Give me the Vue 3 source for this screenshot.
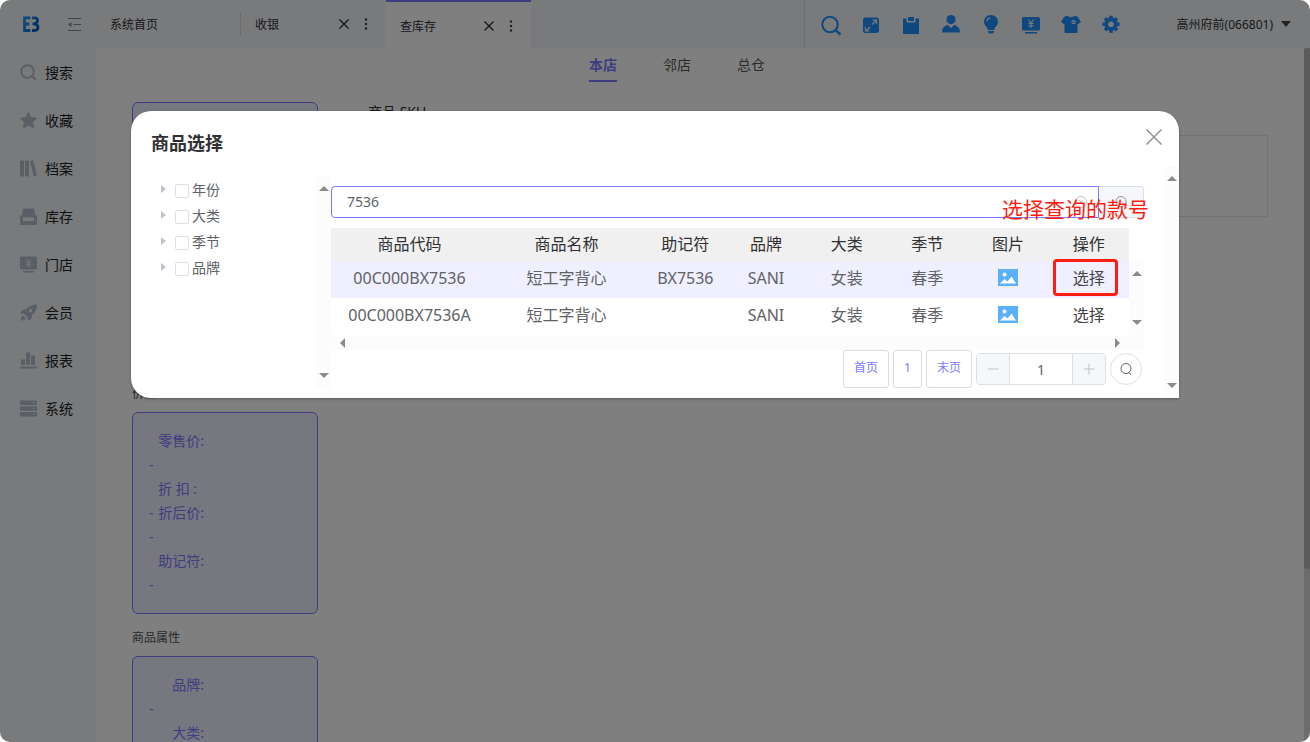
<script setup>
import { ref } from 'vue'

const menu = [
  { key: 'search', label: '搜索' },
  { key: 'star', label: '收藏' },
  { key: 'books', label: '档案' },
  { key: 'stock', label: '库存' },
  { key: 'store', label: '门店' },
  { key: 'rocket', label: '会员' },
  { key: 'chart', label: '报表' },
  { key: 'server', label: '系统' }
]
const tools = [
  { key: 'find', label: '查找' },
  { key: 'expand', label: '全屏' },
  { key: 'clip', label: '单据' },
  { key: 'user', label: '用户' },
  { key: 'bulb', label: '提示' },
  { key: 'cash', label: '收银' },
  { key: 'shirt', label: '商品' },
  { key: 'gear', label: '设置' }
]
const priceLines = [
  ['', '零售价:'],
  ['-', ''],
  ['', '折 扣 :\u00a0\u00a0'],
  ['-', '折后价:'],
  ['-', ''],
  ['', '助记符:'],
  ['-', '']
]
const attrLines = [
  ['', '品牌:'],
  ['-', ''],
  ['', '大类:']
]
const tree = ['年份', '大类', '季节', '品牌']
const columns = ['商品代码', '商品名称', '助记符', '品牌', '大类', '季节', '图片', '操作']
const rows = [
  { code: '00C000BX7536', name: '短工字背心', memo: 'BX7536', brand: 'SANI', type: '女装', season: '春季' },
  { code: '00C000BX7536A', name: '短工字背心', memo: '', brand: 'SANI', type: '女装', season: '春季' }
]
const keyword = ref('7536')
const page = ref('1')
</script>

<template>
  <div class="app">
    <header class="topbar">
      <div class="brand">
        <svg class="logo" viewBox="0 0 17 17" aria-hidden="true">
          <defs>
            <linearGradient id="lg" gradientUnits="userSpaceOnUse" x1="0" y1="4" x2="17" y2="13">
              <stop offset="0" stop-color="#1f9cff" />
              <stop offset="1" stop-color="#0a4fc4" />
            </linearGradient>
          </defs>
          <g fill="none" stroke="url(#lg)" stroke-width="2.800">
            <path d="M7.300 1.800H1.500V14.500h5.800M1.500 8h4.800" />
            <path d="M9 1.800h2.500q3 0 3 2.700T11 7.900H9.500M11 8.100q4 0 4 3.200t-3.600 3.200H9" />
          </g>
        </svg>
        <button class="plain" aria-label="收起菜单">
          <svg class="fold" viewBox="0 0 13 13" fill="none" stroke="#85898e">
            <path d="M0 .5h13M5.500 6.500H13M0 12.500h13" />
            <path d="M0 6.500 3.500 4v5z" fill="#85898e" stroke="none" />
          </svg>
        </button>
      </div>
      <nav class="tabs">
        <div class="tab"><a href="#">系统首页</a></div>
        <div class="tab divided">
          <a href="#">收银</a>
          <button class="plain" aria-label="关闭"><svg class="tab-x" viewBox="0 0 10 10" stroke="#222" stroke-width="1.200"><path d="M.5.5l9 9M9.500.5l-9 9" /></svg></button>
          <button class="plain" aria-label="更多"><svg class="dots" viewBox="0 0 4 12" fill="#444"><circle cx="2" cy="1.500" r="1.200" /><circle cx="2" cy="6" r="1.200" /><circle cx="2" cy="10.500" r="1.200" /></svg></button>
        </div>
        <div class="tab active">
          <a href="#">查库存</a>
          <button class="plain" aria-label="关闭"><svg class="tab-x" viewBox="0 0 10 10" stroke="#222" stroke-width="1.200"><path d="M.5.5l9 9M9.500.5l-9 9" /></svg></button>
          <button class="plain" aria-label="更多"><svg class="dots" viewBox="0 0 4 12" fill="#444"><circle cx="2" cy="1.500" r="1.200" /><circle cx="2" cy="6" r="1.200" /><circle cx="2" cy="10.500" r="1.200" /></svg></button>
        </div>
      </nav>
      <div class="tools">
        <button v-for="t in tools" :key="t.key" class="plain tool" :aria-label="t.label">
          <svg viewBox="0 0 20 20" fill="#1e90ff">
            <g v-if="t.key === 'find'" fill="none" stroke="#1e90ff" stroke-width="2"><circle cx="9" cy="9.500" r="7.700" /><path d="M14.500 15l5 4.500" stroke-width="2.400" /></g>
            <g v-else-if="t.key === 'expand'"><rect x="2" y="2.500" width="16" height="15.500" rx="2.500" /><path d="M11 9.500 15 5.500M11.500 5h4v4M9 12l-4 4M4.500 12v4h4" fill="none" stroke="#f0f4f8" stroke-width="1.200" /></g>
            <g v-else-if="t.key === 'clip'"><path d="M2 3.500h3.500v4h9v-4H18V19H2z" /><path d="M7 2h6v4H7z" /></g>
            <g v-else-if="t.key === 'user'"><circle cx="10" cy="4.600" r="4.600" /><path d="M1 17.500c0-4.500 2.500-7 6-7.500l3 3.300L13 10c3.500.5 6 3 6 7.500z" /></g>
            <g v-else-if="t.key === 'bulb'"><path d="M10 0C6 0 3 3 3 6.800c0 2.700 1.600 4.200 2.900 5.700l1 2.500h6.200l1-2.500C15.400 11 17 9.500 17 6.800 17 3 14 0 10 0zM7 16h6v1.200L11.500 18.500h-3L7 17.200z" /><path d="M5.800 6.500c.2-2 1.500-3.300 3.400-3.600" fill="none" stroke="#f0f4f8" stroke-width="1.200" /></g>
            <g v-else-if="t.key === 'cash'"><rect x="1" y="2" width="18" height="13.500" rx="1.500" /><path d="M4 17h12v1.500H4z" /><path d="M7.300 4.500 10 8l2.700-3.500M10 8v5M7.300 8.500h5.400M7.300 10.800h5.400" fill="none" stroke="#f0f4f8" stroke-width="1.100" /></g>
            <g v-else-if="t.key === 'shirt'"><path d="M6.500.5c.8 2.300 6.200 2.300 7 0L17 2l3 5-3.500 2.500V17q0 1-1 1h-11q-1 0-1-1V9.500L0 7l3-5z" /><circle cx="12.500" cy="7.200" r="1.500" fill="none" stroke="#f0f4f8" stroke-width="1.200" /></g>
            <g v-else>
              <circle cx="10" cy="9.200" r="4.700" fill="none" stroke="#1e90ff" stroke-width="3.800" />
              <path d="M10 .7v3M10 14.700v3M1.500 9.200h3M15.500 9.200h3M4 3.200l2 2M14 13.200l2 2M16 3.200l-2 2M6 13.200l-2 2" stroke="#1e90ff" stroke-width="3.600" />
            </g>
          </svg>
        </button>
        <button class="plain account">高州府前(066801)<i class="caret"></i></button>
      </div>
    </header>

    <div class="body">
      <aside class="side">
        <a v-for="m in menu" :key="m.key" href="#" class="side-item">
          <svg viewBox="0 0 17 17" fill="#b4becc">
            <g v-if="m.key === 'search'" fill="none" stroke="#b4becc" stroke-width="2"><circle cx="7.500" cy="7.500" r="6.300" /><path d="M12.500 12.500l3.500 3.500" /></g>
            <path v-else-if="m.key === 'star'" d="M8.500.5l2.400 5 5.600.8-4 3.900 1 5.600-5-2.700-5 2.700 1-5.600-4-3.900 5.600-.8z" stroke="#b4becc" stroke-linejoin="round" />
            <g v-else-if="m.key === 'books'"><rect y=".5" width="4" height="16" rx=".5" /><rect x="5" y=".5" width="4" height="16" rx=".5" /><path d="M10 1l3.300-.7L17 15.800l-3.200.7z" /></g>
            <path v-else-if="m.key === 'stock'" fill-rule="evenodd" d="M3 .5h11l1 6.500 2 1v8q0 1-1 1H1q-1 0-1-1V8l2-1zM3 9.500v3.500h11V9.500z" />
            <g v-else-if="m.key === 'store'"><rect y=".5" width="17" height="13" rx="1.500" /><path d="M3 15h11v1.500H3z" /><path d="M6 3l2.500 3L11 3M8.500 6v5M6 6.700h5M6 8.800h5" fill="none" stroke="#f0f4f8" /></g>
            <path v-else-if="m.key === 'rocket'" fill-rule="evenodd" d="M17 .5c-5 0-8.500 1.500-11 5L2.500 6 0 9.500l4 .3 3.500 3.500.3 3.700 3.700-2.500.5-3.500c3.500-2.500 5-6 5-10.500zM10.500 5a1.700 1.700 0 110 3.400 1.700 1.700 0 010-3.400zM3 11.500l3 3L4 16l-3.500.7.7-3.500z" />
            <path v-else-if="m.key === 'chart'" d="M1 7.500h4V13H1zM6 .5h4V13H6zM11 3.500h4V13h-4zM0 14.500h17V16.500H0z" />
            <g v-else><path fill-rule="evenodd" d="M1 .5h15q1 0 1 1v2.500q0 1-1 1H1q-1 0-1-1V1.500q0-1 1-1zM13 2v1.500h1.500V2zM1 6.300h15q1 0 1 1v2.500q0 1-1 1H1q-1 0-1-1V7.300q0-1 1-1zM13 7.800v1.500h1.500V7.800zM1 12h15q1 0 1 1v2.500q0 1-1 1H1q-1 0-1-1V13q0-1 1-1zM13 13.500V15h1.500v-1.500z" /></g>
          </svg>
          {{ m.label }}
        </a>
      </aside>

      <main class="main">
        <nav class="scope">
          <a href="#" class="on">本店</a>
          <a href="#">邻店</a>
          <a href="#">总仓</a>
        </nav>
        <div class="content">
          <div class="left">
            <div class="box picture"></div>
            <h4 class="caption">价格</h4>
            <div class="box">
              <p v-for="(l, i) in priceLines" :key="i" class="line"><span class="dash">{{ l[0] }}</span><span class="name">{{ l[1] }}</span></p>
            </div>
            <h4 class="caption">商品属性</h4>
            <div class="box tall">
              <p v-for="(l, i) in attrLines" :key="i" class="line"><span class="dash">{{ l[0] }}</span><span class="name">{{ l[1] }}</span></p>
            </div>
          </div>
          <div class="right">
            <h3 class="sku">商品 SKU</h3>
            <div class="sku-panel"></div>
          </div>
        </div>
        <div class="page-track"><div class="page-thumb"></div></div>
      </main>
    </div>

    <div class="mask">
      <section class="dialog" role="dialog" aria-labelledby="dlg-title">
        <div class="dialog-head">
          <h2 id="dlg-title">商品选择</h2>
          <button class="plain" aria-label="关闭"><svg class="dlg-x" viewBox="0 0 16 16" stroke="#909399" stroke-width="1.500"><path d="M.5.5l15 15M15.500.5l-15 15" /></svg></button>
        </div>
        <div class="dialog-body">
          <div class="dialog-main">
            <ul class="tree">
              <li v-for="t in tree" :key="t">
                <i class="tri"></i>
                <label><input type="checkbox">{{ t }}</label>
              </li>
            </ul>
            <div class="bar vertical"><i class="up"></i><i class="down"></i></div>
            <div class="picker">
              <div class="search">
                <div class="field">
                  <input v-model="keyword" type="text" aria-label="关键字">
                  <svg class="mini" viewBox="0 0 14 14" fill="none" stroke="#c0c4cc"><circle cx="7" cy="7" r="5.500" /><path d="M5 5l4 4M9 5l-4 4" /></svg>
                </div>
                <button aria-label="搜索"><svg class="mini" viewBox="0 0 14 14" fill="none" stroke="#909399"><circle cx="7" cy="6.500" r="5" /><path d="M10 10.500l2.500 2" /></svg></button>
              </div>
              <div class="grid">
                <table>
                  <colgroup><col class="wide"><col class="wide"><col><col><col><col><col><col></colgroup>
                  <thead>
                    <tr><th v-for="c in columns" :key="c">{{ c }}</th></tr>
                  </thead>
                  <tbody>
                    <tr v-for="(r, i) in rows" :key="r.code" :class="{ hover: i === 0 }">
                      <td>{{ r.code }}</td>
                      <td>{{ r.name }}</td>
                      <td>{{ r.memo }}</td>
                      <td>{{ r.brand }}</td>
                      <td>{{ r.type }}</td>
                      <td>{{ r.season }}</td>
                      <td><svg class="pic" viewBox="0 0 20 17"><rect width="20" height="17" fill="#5ab1fb" /><circle cx="6.500" cy="5.500" r="2" fill="#fff" /><path d="M2 14.500l4.500-4.500 3 2.500 4-5L18 14.500z" fill="#fff" /></svg></td>
                      <td class="op"><button class="plain choose">选择</button><span v-if="i === 0" class="mark"></span></td>
                    </tr>
                  </tbody>
                </table>
                <div class="bar vertical"><i class="up"></i><i class="down"></i></div>
                <div class="bar horizontal"><i class="prev"></i><i class="next"></i></div>
              </div>
              <div class="pager">
                <button class="pg">首页</button>
                <button class="pg">1</button>
                <button class="pg">末页</button>
                <div class="stepper">
                  <button aria-label="减少"><svg viewBox="0 0 11 11" stroke="#c0c4cc"><path d="M.5 5.500h10" /></svg></button>
                  <input v-model="page" type="text" aria-label="页码">
                  <button aria-label="增加"><svg viewBox="0 0 11 11" stroke="#c0c4cc"><path d="M.5 5.500h10M5.500.5v10" /></svg></button>
                </div>
                <button class="round" aria-label="跳转"><svg class="mini" viewBox="0 0 14 14" fill="none" stroke="#606266"><circle cx="7" cy="6.500" r="5" /><path d="M9.500 10.500l2.500 2" /></svg></button>
              </div>
              <div class="note">选择查询的款号</div>
            </div>
          </div>
          <div class="bar vertical"><i class="up"></i><i class="down"></i></div>
        </div>
      </section>
    </div>
  </div>
</template>

<style>
body { margin: 0; background: #fff; }
</style>

<style scoped>
* { box-sizing: border-box; }
.app {
  position: relative;
  height: 100vh;
  display: flex;
  flex-direction: column;
  overflow: hidden;
  border-radius: 10px;
  background: #fff;
  color: #303133;
  font: 14px/20px "Noto Sans", "Noto Sans CJK SC", sans-serif;
}
a { color: inherit; text-decoration: none; }
svg { display: block; }
button, input { font: inherit; color: inherit; }
h2, h3, h4, p, ul { margin: 0; padding: 0; font-weight: 400; list-style: none; }
.plain { display: block; padding: 0; border: 0; background: none; }

.topbar { display: flex; height: 48px; flex: none; background: #f0f4f8; font-size: 12px; }
.brand { width: 96px; display: flex; align-items: center; padding-left: 23px; gap: 28px; }
.logo { width: 17px; height: 17px; }
.fold { width: 13px; height: 13px; }
.tabs { display: flex; flex: 1; align-items: center; }
.tab { width: 145px; height: 48px; display: flex; align-items: center; padding: 0 18px 0 14px; }
.tab a { flex: 1; padding-top: 1px; }
.tab .plain + .plain { margin-left: 15px; }
.tab-x { width: 10px; height: 10px; }
.dots { width: 4px; height: 12px; }
.divided::before { content: ""; width: 1px; height: 24px; margin: 0 14px 0 -15px; background: #d3d7dc; }
.tab.active { border-top: 2px solid #7b7bff; padding-top: 2px; background: #fff; }
.tools { display: flex; align-items: center; border-left: 1px solid #dadde0; padding: 1px 19px 0 16px; }
.tool { margin-right: 20px; }
.tool svg { width: 20px; height: 20px; overflow: visible; }
.account { display: flex; align-items: center; gap: 8px; margin-left: 36px; padding-top: 1px; }
.caret { margin-bottom: 2px; border: 5px solid transparent; border-top: 6px solid #444; border-bottom: 0; }

.body { display: flex; flex: 1; min-height: 0; }
.side { width: 96px; flex: none; background: #f0f4f8; }
.side-item { display: flex; align-items: center; height: 48px; padding: 2px 0 0 20px; gap: 8px; color: #222; }
.side-item svg { width: 17px; height: 17px; margin-bottom: 2px; }
.main { position: relative; flex: 1; min-width: 0; overflow: hidden; }
.scope { display: flex; justify-content: center; gap: 46px; height: 34px; padding-right: 52px; }
.scope a { padding-top: 7px; color: #555; }
.scope .on { border-bottom: 2px solid #7b7bff; color: #7b7bff; font-weight: 700; }
.content { display: flex; padding: 20px 42px 0 36px; gap: 34px; }
.left { width: 186px; flex: none; }
.box { border: 1px solid #7b7bff; border-radius: 6px; padding: 16px; background: #efefff; color: #7b7bff; }
.picture { height: 268px; }
.tall { min-height: 202px; }
.caption { height: 42px; padding-top: 14px; font-size: 12px; color: #555; }
.line { display: flex; height: 24px; line-height: 24px; }
.dash { width: 9px; }
.name { width: 46px; text-align: right; white-space: nowrap; }
.right { flex: 1; }
.sku { height: 33px; padding-left: 16px; font-size: 14px; }
.sku-panel { height: 82px; border: 1px solid #e4e7f0; }
.page-track { position: absolute; top: 0; bottom: 0; right: 0; width: 6px; background: #d8d8d8; }
.page-thumb { height: 75%; border-radius: 3px; background: #b4b4b4; }

.mask { position: absolute; inset: 0; background: rgba(0, 0, 0, .5); }
.dialog { width: 80%; margin: 15vh auto 0; border-radius: 20px 20px 0 20px; overflow: hidden; background: #fff; box-shadow: 0 1px 3px rgba(0, 0, 0, .3); }
.dialog-head { display: flex; justify-content: space-between; padding: 18px 17px 0 20px; height: 55px; }
.dialog-head h2 { font-size: 18px; line-height: 28px; font-weight: 700; }
.dialog-head .plain { height: 16px; }
.dlg-x { width: 16px; height: 16px; }
.dialog-body { display: flex; }
.dialog-main { flex: 1; min-width: 0; display: flex; padding: 10px 20px 10px; }
.bar { display: flex; justify-content: space-between; align-items: center; background: #fcfcfc; }
.bar i { width: 0; height: 0; border: 5px solid transparent; }
.vertical { flex: none; width: 15px; flex-direction: column; padding: 10px 0; }
.horizontal { height: 15px; padding: 0 24px 0 9px; }
.bar .up { border-top: 0; border-bottom-color: #8b8b8b; }
.bar .down { border-bottom: 0; border-top-color: #8b8b8b; }
.bar .prev { border-left: 0; border-right-color: #8b8b8b; }
.bar .next { border-right: 0; border-left-color: #8b8b8b; }

.tree { width: 165px; flex: none; padding-top: 1px; color: #606266; }
.tree li { display: flex; height: 26px; align-items: center; }
.tri { width: 5px; margin: 0 9px 2px 10px; border: 4px solid transparent; border-left: 5px solid #c0c4cc; border-right: 0; }
.tree label { display: flex; align-items: center; gap: 3px; }
.tree input { appearance: none; width: 14px; height: 14px; margin: 2px 0 0; border: 1px solid #dcdfe6; border-radius: 2px; background: #fff; }

.picker { position: relative; flex: 1; min-width: 0; padding-top: 10px; }
.search { display: flex; height: 32px; }
.field { flex: 1; display: flex; align-items: center; padding: 0 10px 0 15px; border: 1px solid #7b7bff; border-radius: 4px 0 0 4px; }
.field input { flex: 1; min-width: 0; border: 0; padding: 0; outline: 0; background: none; color: #606266; }
.mini { width: 14px; height: 14px; }
.search button { width: 45px; padding: 0 15px; border: 1px solid #dcdfe6; border-left: 0; border-radius: 0 4px 4px 0; background: #f5f7fa; }
.grid { display: grid; grid-template-columns: 1fr 15px; margin-top: 10px; }
.grid > .vertical { margin-top: 33px; }
.horizontal { grid-column: 1 / 3; }
table { width: 100%; table-layout: fixed; border-collapse: collapse; font-size: 16px; text-align: center; }
.wide { width: 157px; }
th { height: 33px; padding: 0 0 2px; font-weight: 400; background: #f0f0f0; }
td { height: 37px; padding: 0 0 3px; color: #606266; }
.hover td { background: #efefff; }
.pic { width: 20px; height: 17px; margin: 0 auto 1px; }
.op { position: relative; }
.choose { margin: 0 auto; color: #444; }
.mark { position: absolute; inset: -2px 11px 2px 5px; border: 3px solid #ff1d12; border-radius: 4px; }
.pager { display: flex; justify-content: flex-end; align-items: center; gap: 4px; height: 38px; padding-right: 2px; }
.pg { height: 38px; padding: 0 10px 2px; border: 1px solid #dcdcdc; border-radius: 3px; background: #fff; color: #7b7bff; font-size: 12px; }
.stepper { display: flex; width: 130px; height: 32px; border: 1px solid #dcdfe6; border-radius: 4px; overflow: hidden; }
.stepper button { width: 32px; padding: 0 10px; border: 0; background: #f5f7fa; }
.stepper input { flex: 1; min-width: 0; padding: 2px 0 0; border: solid #dcdfe6; border-width: 0 1px; text-align: center; color: #606266; }
.round { width: 32px; height: 32px; padding: 0 8px; border: 1px solid #dcdfe6; border-radius: 50%; background: #fff; }
.note { position: absolute; top: 19px; right: -5px; color: #ff1d12; font-size: 21px; line-height: 28px; }
</style>
